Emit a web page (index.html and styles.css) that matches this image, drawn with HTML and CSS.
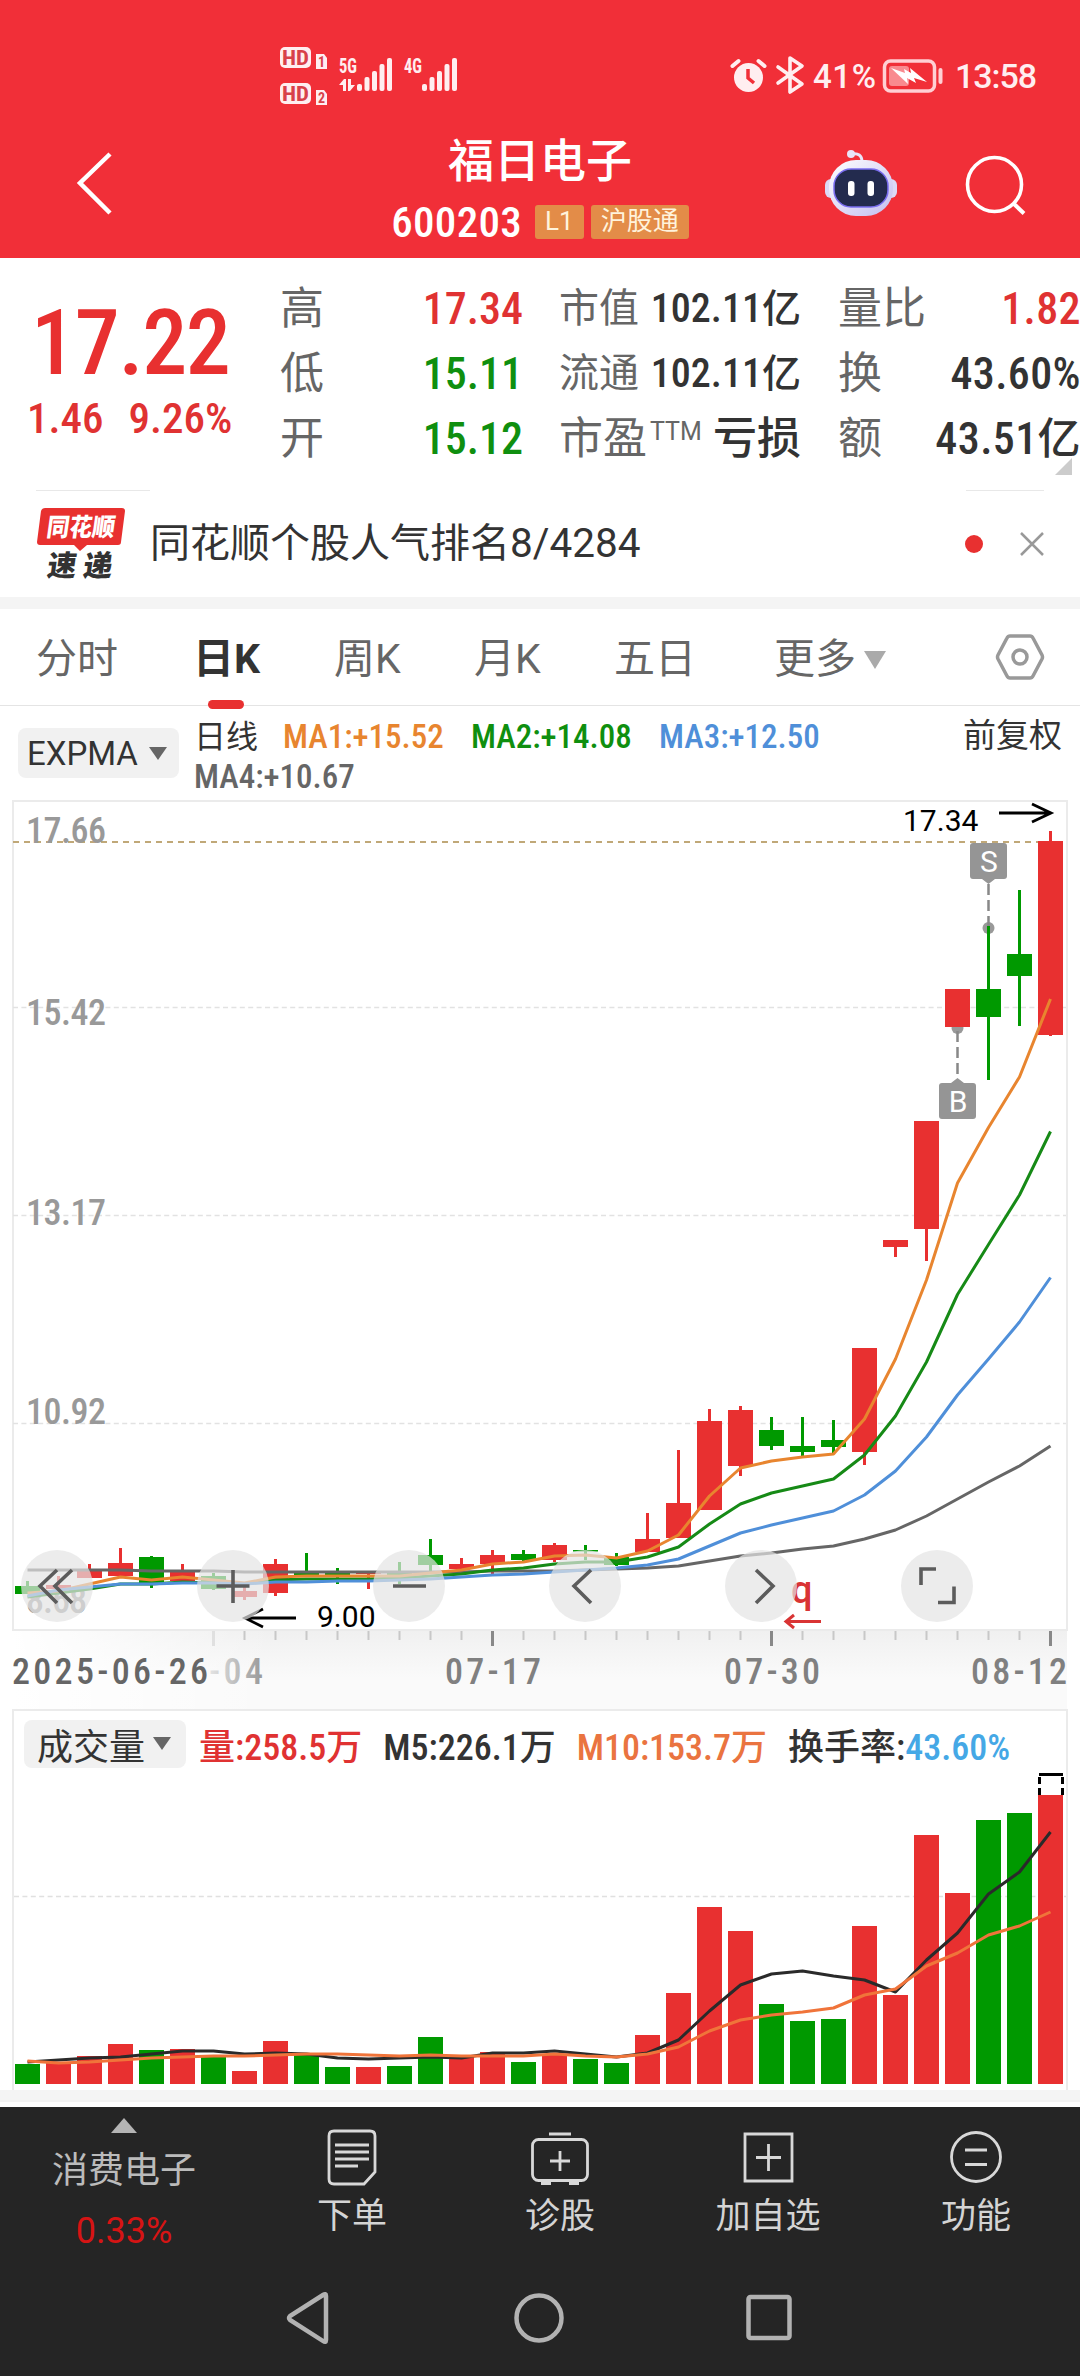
FILE: index.html
```html
<!DOCTYPE html>
<html lang="zh-CN">
<head>
  <meta charset="UTF-8">
  <title>福日电子 600203</title>
  <link rel="stylesheet" href="styles.css">
</head>
<body>
  <header class="top">
    <div class="statusbar">
      <svg class="signal" width="200" height="80" viewBox="270 35 200 80">
        <g fill="#ffeef0">
          <rect x="280" y="47" width="31" height="21" rx="5"/>
          <rect x="280" y="83" width="31" height="21" rx="5"/>
          <path d="M316 54h8l3 4v11h-11zM316 90h8l3 4v11h-11z"/>
          <rect x="357" y="84" width="5" height="7" rx="2"/><rect x="364.500" y="77" width="5" height="14" rx="2"/><rect x="372" y="71" width="5" height="20" rx="2"/><rect x="379.500" y="64" width="5" height="27" rx="2"/><rect x="387" y="58" width="5" height="33" rx="2"/>
          <rect x="422" y="84" width="5" height="7" rx="2"/><rect x="429.500" y="77" width="5" height="14" rx="2"/><rect x="437" y="71" width="5" height="20" rx="2"/><rect x="444.500" y="64" width="5" height="27" rx="2"/><rect x="452" y="58" width="5" height="33" rx="2"/>
          <path d="M339 85l5-6h2v12h-3v-6zM348 79h3v6h4l-5 6h-2z"/>
        </g>
        <g class="cond signal-text" fill="#ffeef0" font-size="20">
          <text x="339" y="73" textLength="18" lengthAdjust="spacingAndGlyphs">5G</text>
          <text x="404" y="73" textLength="18" lengthAdjust="spacingAndGlyphs">4G</text>
        </g>
        <g class="cond signal-text" fill="#d8404a">
          <text x="282" y="65" font-size="21" textLength="27" lengthAdjust="spacingAndGlyphs">HD</text>
          <text x="282" y="101" font-size="21" textLength="27" lengthAdjust="spacingAndGlyphs">HD</text>
          <text x="318" y="67" font-size="14">1</text>
          <text x="318" y="103" font-size="14">2</text>
        </g>
      </svg>
      <svg class="phone" width="330" height="40" viewBox="720 55 330 40">
        <circle cx="748.500" cy="77.500" r="14.500" fill="#ffeef0"/>
        <path d="M748 69v9l6 5" fill="none" stroke="#f12f38" stroke-width="3.500"/>
        <path d="M732.500 66l6-5M764.500 66l-6-5" stroke="#ffeef0" stroke-width="4" stroke-linecap="round"/>
        <path d="M779 68l24 17-12 8V59l12 8-24 17" transform="translate(-1 -1)" fill="none" stroke="#ffeef0" stroke-width="3.600" stroke-linejoin="round" stroke-linecap="round"/>
        <text x="813" y="87.500" font-size="33" font-weight="500" textLength="63">41%</text>
        <rect x="884.500" y="61" width="50" height="30" rx="6" fill="none" stroke="#ffd0d4" stroke-width="3.500"/>
        <rect x="889" y="66" width="20" height="20" rx="3" fill="#f98a8f"/>
        <path d="M891 68l14 5-1-4 7 4-1-5 17 14-13-4 2 5-9-5 1 6z" fill="#fff"/>
        <rect x="938.500" y="68" width="4" height="16" rx="2" fill="#ffd0d4"/>
        <text x="955" y="87.500" font-size="34" font-weight="500" textLength="82">13:58</text>
      </svg>
    </div>
    <div class="titlebar">
      <svg class="back" width="44" height="72" viewBox="73 147 44 72"><path d="M110 154L80 183l30 30" fill="none" stroke="#fff" stroke-width="4.500"/></svg>
      <div class="title">
        <h1>福日电子</h1>
        <div class="code"><span class="num">600203</span><span class="tag">L1</span><span class="tag">沪股通</span></div>
      </div>
      <svg class="robot" width="76" height="72" viewBox="823 147 76 72">
        <defs>
          <linearGradient id="shell" x1="0" y1="0" x2="1" y2="1"><stop offset="0" stop-color="#fff"/><stop offset="1" stop-color="#c3bdf0"/></linearGradient>
        </defs>
        <rect x="825" y="179" width="72" height="19" rx="6" fill="#dcd9f6"/>
        <path d="M862 162c0-7-4-9-10-8" fill="none" stroke="#e9e4f8" stroke-width="3"/>
        <circle cx="851" cy="154" r="4" fill="#e9e4f8"/>
        <rect x="829" y="160" width="64" height="56" rx="27" fill="url(#shell)"/>
        <rect x="834" y="169" width="54" height="38" rx="17" fill="#232b4e" stroke="#7a6df0" stroke-width="1.500"/>
        <rect x="848" y="181" width="6.500" height="15" rx="3" fill="#fff"/>
        <rect x="867.500" y="181" width="6.500" height="15" rx="3" fill="#fff"/>
      </svg>
      <svg class="search" width="64" height="64" viewBox="964 154 64 64"><circle cx="994.500" cy="184.500" r="27" fill="none" stroke="#fff" stroke-width="3.600"/><path d="M1013 203l11 10.500" stroke="#fff" stroke-width="4"/></svg>
    </div>
  </header>

  <section class="quote">
    <div class="price">
      <div class="last num">17.22</div>
      <div class="change num"><span>1.46</span><span>9.26%</span></div>
    </div>
    <div class="cell c1"><label>高</label><b class="num red">17.34</b></div>
    <div class="cell c2"><label>市值</label><b class="num">102.11<i>亿</i></b></div>
    <div class="cell c3"><label>量比</label><b class="num red">1.82</b></div>
    <div class="cell c1"><label>低</label><b class="num green">15.11</b></div>
    <div class="cell c2"><label>流通</label><b class="num">102.11<i>亿</i></b></div>
    <div class="cell c3"><label>换</label><b class="num">43.60%</b></div>
    <div class="cell c1"><label>开</label><b class="num green">15.12</b></div>
    <div class="cell c2 pe"><label>市盈<sup>TTM</sup></label><b class="loss">亏损</b></div>
    <div class="cell c3"><label>额</label><b class="num">43.51<i>亿</i></b></div>
    <span class="corner"></span>
  </section>

  <section class="banner">
    <svg class="logo" width="92" height="76" viewBox="36 505 92 76">
      <path d="M45 507h77q3 0 3 3l-4 31q0 3-3 3H87l-7 6-6-6H40q-3 0-3-3l4-31q1-3 4-3z" fill="#e8302f"/>
      <text class="logo-text" transform="skewX(-8)" x="121" y="535" font-size="25" fill="#fff" textLength="68" lengthAdjust="spacingAndGlyphs">同花顺</text>
      <text class="logo-text" transform="skewX(-8)" x="127" y="575" font-size="29" fill="#333" textLength="65">速递</text>
    </svg>
    <p>同花顺个股人气排名<span>8/4284</span></p>
    <i class="dot"></i>
    <svg class="close" width="24" height="24" viewBox="0 0 24 24"><path d="M1 1l22 22M23 1L1 23" stroke="#999" stroke-width="2.500"/></svg>
  </section>

  <nav class="tabs">
    <a>分时</a>
    <a class="active">日K</a>
    <a>周K</a>
    <a>月K</a>
    <a>五日</a>
    <a class="more">更多<i class="arrow"></i></a>
    <svg width="50" height="48" viewBox="0 0 50 48"><path d="M15 3h20q2 0 3 2l9 17q1 2 0 4l-9 17q-1 2-3 2H15q-2 0-3-2L3 26q-1-2 0-4L12 5q1-2 3-2z" fill="none" stroke="#999" stroke-width="3.500"/><circle cx="25" cy="24" r="7" fill="none" stroke="#999" stroke-width="3.500"/></svg>
  </nav>

  <section class="indicators">
    <button class="pill">EXPMA<i class="arrow"></i></button>
    <div class="averages">
      <span class="day">日线</span>
      <span class="num orange">MA1:+15.52</span>
      <span class="num green">MA2:+14.08</span>
      <span class="num blue">MA3:+12.50</span>
      <span class="num grey">MA4:+10.67</span>
    </div>
    <span class="adjust">前复权</span>
  </section>

  <svg class="kline" width="1080" height="909" viewBox="0 800 1080 909">
    <defs>
      <linearGradient id="axis" x1="0" y1="0" x2="0" y2="1"><stop offset="0" stop-color="#f0f0f0"/><stop offset=".6" stop-color="#fafafa"/><stop offset="1" stop-color="#fafafa"/></linearGradient>
      <linearGradient id="fade"><stop offset="0" stop-color="#fff"/><stop offset="1" stop-color="#fff" stop-opacity="0"/></linearGradient>
      <linearGradient id="late"><stop offset="0" stop-color="#e4e4e4"/><stop offset="1" stop-color="#999"/></linearGradient>
    </defs>
    <rect x="13" y="1631" width="1054" height="78" fill="url(#axis)"/>
    <rect x="13" y="1631" width="260" height="78" fill="url(#fade)"/>
    <rect x="13" y="801" width="1054" height="829" fill="none" stroke="#ebebeb" stroke-width="2"/>
    <path d="M13 1007.500H1066M13 1215.500H1066M13 1423.500H1066" stroke="#e2e2e2" stroke-width="1.500" stroke-dasharray="5 3.400"/>
    <path d="M13 842H1038" stroke="#c0a878" stroke-width="2" stroke-dasharray="6 5"/>
    <g id="ticks"></g>
    <g class="cond scale">
      <text x="26" y="843" textLength="80">17.66</text>
      <text x="26" y="1025" textLength="80">15.42</text>
      <text x="26" y="1225" textLength="80">13.17</text>
      <text x="26" y="1424" textLength="80">10.92</text>
      <text x="26" y="1613" textLength="61">8.68</text>
    </g>
    <g fill="#999">
      <circle cx="988.500" cy="928" r="6"/>
      <circle cx="957.500" cy="1028" r="6"/>
    </g>
    <g id="candles"></g>
    <g id="averages"></g>
    <path d="M988.500 884v42M957.500 1031v47" stroke="#888" stroke-width="2.500" stroke-dasharray="11 5"/>
    <g fill="#959595">
      <path d="M973 843h31q3 0 3 3v30q0 3-3 3h-9l-6.500 5-6.500-5h-9q-3 0-3-3v-30q0-3 3-3z"/>
      <path d="M942 1083h9l6.500-5 6.500 5h9q3 0 3 3v30q0 3-3 3h-31q-3 0-3-3v-30q0-3 3-3z"/>
    </g>
    <g font-size="30" fill="#fff" text-anchor="middle">
      <text x="989" y="872">S</text>
      <text x="958" y="1112">B</text>
    </g>
    <g font-size="30">
      <text x="903" y="831">17.34</text>
      <text x="317" y="1627">9.00</text>
    </g>
    <path d="M999 813h51M1032 804l19 9-19 9M296 1618h-50M263 1609l-18 9 18 9" fill="none" stroke="#000" stroke-width="2.800"/>
    <text x="791" y="1603" font-size="38" font-weight="500" fill="#d93434">q</text>
    <path d="M821 1621.500h-35M794 1615l-8 6.500 8 6.500" fill="none" stroke="#d93434" stroke-width="3"/>
    <g fill="#e4e4e4" fill-opacity=".7">
      <circle cx="57" cy="1586" r="36"/><circle cx="233" cy="1586" r="36"/><circle cx="409" cy="1586" r="36"/><circle cx="585" cy="1586" r="36"/><circle cx="761" cy="1586" r="36"/><circle cx="937" cy="1586" r="36"/>
    </g>
    <path d="M57 1570l-17 16 17 17M72 1570l-17 16 17 17M233 1570v33M216.500 1586h33M393 1586h33M591 1570l-17 16 17 17M756 1570l17 16-17 17M921 1585v-16h15M938 1602.500h16v-16" fill="none" stroke="#5c5c5c" stroke-width="3.600"/>
    <g class="cond dates">
      <text x="12" y="1684" textLength="196" fill="#666">2025-06-26</text>
      <text x="209" y="1684" textLength="54" fill="url(#late)">-04</text>
      <text x="445" y="1684" textLength="96">07-17</text>
      <text x="724" y="1684" textLength="96">07-30</text>
      <text x="971" y="1684" textLength="96">08-12</text>
    </g>
  </svg>

  <section class="volume">
    <div class="legend">
      <button class="pill">成交量<i class="arrow"></i></button>
      <span class="num red">量:258.5万</span>
      <span class="num">M5:226.1万</span>
      <span class="num amber">M10:153.7万</span>
      <span class="num">换手率:<em>43.60%</em></span>
    </div>
    <svg width="1052" height="314" viewBox="14 1770 1052 314">
      <path d="M14 1896.500H1066" stroke="#e0e0e0" stroke-width="1.500" stroke-dasharray="5 3.400"/>
      <g id="bars"></g>
      <path d="M1039.500 1795v-7m0-4v-7m23 18v-7m0-4v-7M1039 1774.500h24" fill="none" stroke="#000" stroke-width="3"/>
      <g id="volumeLines"></g>
    </svg>
  </section>

  <footer>
    <div class="actions">
      <div class="sector"><i class="up"></i><span>消费电子</span><b>0.33%</b></div>
      <div><svg width="60" height="60" viewBox="0 0 60 60"><path d="M12 4h36q5 0 5 5v36L42 57H12q-5 0-5-5V9q0-5 5-5zM13 18h34M13 25h34M13 32h34M13 39h23"/></svg><span>下单</span></div>
      <div><svg width="60" height="60" viewBox="0 0 60 60"><rect x="2.500" y="12.500" width="55" height="41" rx="6"/><path d="M19 7h22M30 24v20M20 34h20M11 56.500h10M39 56.500h10"/></svg><span>诊股</span></div>
      <div><svg width="60" height="60" viewBox="0 0 60 60"><path d="M7 7h47v47H7zM30.500 17v27M18 30.500h25"/></svg><span>加自选</span></div>
      <div><svg width="60" height="60" viewBox="0 0 60 60"><circle cx="30" cy="30" r="24.500"/><path d="M19 23h22M19 37.500h22"/></svg><span>功能</span></div>
    </div>
    <div class="system">
      <svg width="50" height="54" viewBox="0 0 50 54"><path d="M42 5v44q0 3-3 1L6 29q-2-2 0-4L39 4q3-2 3 1z"/></svg>
      <svg width="54" height="54" viewBox="0 0 54 54"><circle cx="27" cy="27" r="22.500"/></svg>
      <svg width="50" height="54" viewBox="0 0 50 54"><rect x="4.500" y="6" width="41" height="41" rx="2"/></svg>
    </div>
  </footer>

  <script>
    const RED = '#e83030', GREEN = '#009900';
    const cx = i => 27.5 + 31 * i;

    // colour, body top, body bottom, high, low
    const candles = [
      ['g',1586,1594,1581,1594],['r',1585,1589,1576,1589],['r',1571,1578,1564,1578],['r',1563,1576,1548,1576],
      ['g',1557,1583,1556,1588],['r',1571,1581,1564,1581],['g',1576,1589,1573,1590],['r',1591,1597,1587,1600],
      ['r',1564,1593,1559,1596],['g',1573,1575,1553,1575],['g',1573,1576,1568,1584],['r',1572,1574,1572,1589],
      ['g',1573,1575,1562,1584],['g',1555,1565,1539,1571],['r',1564,1569,1558,1569],['r',1555,1564,1550,1574],
      ['g',1554,1560,1550,1562],['r',1545,1560,1543,1562],['g',1550,1551.5,1545,1560],['g',1557,1565,1553,1566],
      ['r',1539,1552,1513,1552],['r',1503,1538,1450,1538],['r',1421,1510,1409,1510],['r',1410,1466,1406,1476],
      ['g',1430,1446,1417,1450],['g',1446,1452,1417,1457],['g',1440,1447,1420,1454],['r',1348,1452,1348,1465],
      ['r',1240,1247,1240,1257],['r',1121,1229,1121,1261],['r',989,1027,989,1027],['g',989,1017,926,1080],
      ['g',954,976,890,1026],['r',841,1035,831,1036]
    ];
    const averages = {
      '#666666': [1570,1570,1570,1570,1571,1571,1571,1572,1572,1572,1572,1572,1572,1572,1572,1571,1571,1571,1570,1569,1568,1566,1561,1556,1553,1549,1546,1539,1530,1516,1499,1482,1466,1446],
      '#168a16': [1597,1593,1589,1584,1584,1582,1583,1584,1580,1579,1579,1579,1578,1576,1574,1570,1568,1564,1562,1562,1557,1547,1524,1504,1493,1486,1479,1455,1416,1362,1294.5,1244.5,1195,1131.5],
      '#e8852f': [1593,1591,1584,1577,1580,1577,1580,1583,1577,1576,1576,1576,1576,1573,1570,1564,1562,1556,1555,1558,1551,1535,1496,1468,1461,1457,1454,1419,1359,1280,1183,1127.5,1077,999],
      '#4f8fd9': [1596,1590,1587,1584,1584,1583,1583,1584,1582,1582,1581,1581,1580,1579,1577,1575,1574,1572,1570,1568,1565,1559,1546,1533,1525,1518,1511,1495,1471,1437,1395,1359,1322,1277.5]
    };
    const volumes = [2064,2063,2056,2044,2050,2049,2057,2071,2041,2055,2067,2067,2066,2037,2057,2052,2062,2055,2059,2063,2035,1993,1907,1931,2004,2021,2019,1926,1995,1835,1893,1820,1813,1795];
    const volumeLines = {
      '#2a2a2a': [2062,2060,2058,2057,2054,2051,2051,2054,2053,2054,2058,2059,2058,2057,2058,2053,2053,2051,2054,2057,2053,2040,2011,1985,1974,1971,1976,1980,1992,1960,1933,1894,1872,1832],
      '#f0743a': [2061,2063,2062,2060,2058,2057,2056,2056,2055,2054,2054,2055,2056,2055,2056,2056,2056,2054,2056,2057,2054,2047,2031,2020,2015,2012,2008,1995,1989,1966,1953,1935,1926,1912]
    };

    function line(points, color) {
      return `<polyline fill="none" stroke="${color}" stroke-width="3" stroke-linejoin="round" points="${points.map((y, i) => cx(i) + ',' + y).join(' ')}"/>`;
    }

    document.getElementById('candles').innerHTML = candles.map(([c, top, bottom, high, low], i) => {
      const fill = c === 'r' ? RED : GREEN;
      return `<rect x="${cx(i) - 12.5}" y="${top}" width="25" height="${bottom - top}" fill="${fill}"/>
              <rect x="${cx(i) - 1.5}" y="${high}" width="3" height="${low - high}" fill="${fill}"/>`;
    }).join('');

    document.getElementById('bars').innerHTML = volumes.map((y, i) =>
      `<rect x="${cx(i) - 12.5}" y="${y}" width="25" height="${2084 - y}" fill="${candles[i][0] === 'r' ? RED : GREEN}"/>`
    ).join('');

    document.getElementById('averages').innerHTML = Object.entries(averages).map(([c, p]) => line(p, c)).join('');
    document.getElementById('volumeLines').innerHTML = Object.entries(volumeLines).map(([c, p]) => line(p, c)).join('');

    // one tick per day, a longer one at each dated day
    let ticks = '';
    for (let i = 6; i < 34; i++) {
      const major = (i - 6) % 9 === 0;
      ticks += `<rect x="${cx(i) - (major ? 1.5 : 1)}" y="1631" width="${major ? 3 : 2}" height="${major ? 15 : 9}" fill="${i === 6 ? '#e0e0e0' : major ? '#888' : '#c8c8c8'}"/>`;
    }
    document.getElementById('ticks').innerHTML = ticks;
  </script>
</body>
</html>
```
FILE: styles.css
```css
* { box-sizing: border-box; }
body { margin: 0; width: 1080px; background: #fff; color: #333; font-family: Roboto, "Noto Sans CJK SC", sans-serif; }
svg { display: block; }
h1, p { margin: 0; }
label, i, em, b { font-style: normal; }
button { border: 0; font: inherit; color: inherit; }
.num, .cond { font-family: "Roboto Condensed", "Noto Sans CJK SC", sans-serif; font-weight: 500; }
.signal-text { font-weight: 700; }
.red { color: #e03232; }
.green { color: #0f8f0f; }
.orange { color: #e8852f; }
.blue { color: #4f8fd9; }
.grey { color: #666; }
.amber { color: #ea7440; }

.top { height: 258px; background: #f12f38; color: #fff; }
.statusbar { display: flex; justify-content: space-between; height: 115px; padding: 35px 30px 0 270px; }
.phone { margin-top: 20px; fill: #ffeef0; }
.titlebar { display: grid; grid-template-columns: 250px 580px 141px 109px; height: 143px; }
.back { margin: 32px 0 0 73px; }
.title { text-align: center; }
.title h1 { margin-top: 16px; font-size: 46px; line-height: 60px; font-weight: 500; }
.code { display: flex; align-items: center; justify-content: center; height: 48px; margin-top: 7px; font-size: 43px; line-height: 48px; }
.code .num { margin-right: 13px; letter-spacing: .3px; }
.tag { height: 34px; margin-right: 7px; padding: 0 10px; border-radius: 3px; background: #e38c48; color: #fff3dc; font-size: 26px; line-height: 33px; }
.tag:last-child { margin-right: 0; }
.robot { margin: 32px 0 0 -7px; }
.search { margin: 39px 0 0 -7px; }

.quote { display: grid; grid-template-columns: 280px 279px 279px 242px; grid-template-rows: repeat(3, 65px); height: 232px; padding-top: 18px; position: relative; }
.price { grid-row: 1 / 4; color: #e83030; }
.last { margin: 14px 0 0 31px; font-size: 90px; line-height: 108px; letter-spacing: -1.3px; }
.change { display: flex; gap: 25px; margin: -7px 0 0 27px; color: #e03232; font-size: 43px; line-height: 54px; }
.cell { display: flex; align-items: center; justify-content: space-between; font-size: 44px; line-height: 60px; white-space: nowrap; }
.cell label { color: #666; }
.cell b { font-weight: 500; }
.c1 { padding-right: 36px; }
.c2 { padding-right: 37px; font-size: 40px; }
.c3 b { letter-spacing: .4px; margin-right: -1px; }
.pe { font-size: 44px; }
.pe sup { font-size: 25px; line-height: 1; vertical-align: 14px; margin-left: 3px; }
.cell i { font-size: 39px; }
.c3 i { font-size: 43px; }
.corner { position: absolute; right: 8px; bottom: 15px; border: solid transparent; border-width: 17px 0 0 17px; border-bottom: 17px solid #ccc; border-top: 0; }

.banner { display: flex; align-items: center; height: 107px; padding: 0 36px; background: linear-gradient(#e8e8e8, #e8e8e8) 36px 0 / 114px 1px no-repeat, linear-gradient(#e8e8e8, #e8e8e8) 966px 0 / 78px 1px no-repeat; }
.logo { overflow: visible; }
.logo-text { font-family: "Noto Sans CJK SC", sans-serif; font-weight: 900; }
.banner p { margin: -7px 0 0 22px; font-size: 40px; }
.banner p span { font-size: 40.5px; }
.banner .dot { width: 18px; height: 18px; margin-left: auto; border-radius: 50%; background: #e83030; }
.banner .close { margin-left: 37px; }

.tabs { display: grid; grid-template-columns: 160px 138px 140px 140px 160px 221px 50px; height: 109px; padding: 0 0 0 36px; border-top: 12px solid #f4f4f4; border-bottom: 1px solid #e4e4e4; color: #666; font-size: 41px; line-height: 100px; }
.tabs .active { position: relative; margin-left: -3px; color: #333; font-weight: 700; }
.tabs .active::after { content: ""; position: absolute; left: 15px; bottom: 0; width: 36px; height: 9px; border-radius: 5px; background: #e83030; }
.tabs svg { margin-top: 24px; }
.arrow { display: inline-block; border: 9px solid transparent; border-top: 13px solid #666; border-bottom: 0; }
.tabs .arrow { margin-left: 8px; border-width: 18px 11px 0; border-top-color: #aaa; vertical-align: 4px; }

.indicators { display: flex; height: 94px; padding: 0 18px; }
.pill { display: flex; align-items: center; justify-content: space-between; background: #f1f1f1; border-radius: 8px; color: #333; }
.indicators .pill { width: 161px; height: 50px; margin-top: 22px; padding: 1px 12px 0 9px; font-size: 33px; }
.averages { display: flex; flex-wrap: wrap; align-content: flex-start; width: 700px; margin: 11px 0 0 15px; column-gap: 27px; font-size: 33px; line-height: 40px; white-space: nowrap; }
.averages .num { width: 161px; }
.averages .day { width: 62px; font-size: 32px; }
.adjust { margin: 10px 0 0 auto; font-size: 33px; line-height: 40px; }
.kline { font-family: Roboto, sans-serif; }
.scale { font-size: 36px; fill: #999; }
.dates { font-size: 36px; fill: #808080; }

.volume { width: 1056px; height: 381px; margin: 0 12px; border: 2px solid #ebebeb; border-bottom: 0; }
.legend { display: flex; align-items: center; height: 59px; padding: 6px 0 0 10px; font-size: 36px; white-space: nowrap; gap: 21px; }
.legend .pill { width: 162px; height: 48px; padding: 0 15px 0 13px; margin-right: -8px; flex: none; }
.legend em { color: #45a8e6; }

footer { height: 286px; border-top: 12px solid #f4f4f4; background: #252525; }
.actions { display: grid; grid-template-columns: 248px repeat(4, 208px); height: 168px; border-top: 5px solid #fff; color: #d4d4d4; font-size: 35px; }
.actions div { display: flex; flex-direction: column; align-items: center; padding-top: 20px; }
.actions svg { fill: none; stroke: #d8d8d8; stroke-width: 2.8; }
.actions span { margin-top: 5px; line-height: 50px; }
.actions .sector { padding-top: 11px; color: #bbb; }
.up { border: 13px solid transparent; border-bottom: 15px solid #b4b4b4; border-top: 0; }
.actions .sector span { margin-top: 13px; font-size: 36px; }
.sector b { margin-top: 14px; color: #d61414; font-weight: 400; font-size: 36px; line-height: 42px; }
.system { display: flex; justify-content: space-between; padding: 21px 286px 0 284px; }
.system svg { fill: none; stroke: #b2b2b2; stroke-width: 4.5; }
```
